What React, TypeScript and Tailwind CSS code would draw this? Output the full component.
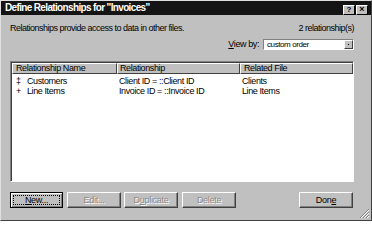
import React from "react";

const font = { fontFamily: '"Liberation Sans", Arial, sans-serif' };

function Btn({ children, disabled, focus, className = "" }: { children: React.ReactNode; disabled?: boolean; focus?: boolean; className?: string }) {
  return (
    <div className={`h-[16px] bg-[#c0c0c0] border ${focus ? "border-black shadow-[inset_1px_1px_0_#fff,inset_-1px_-1px_0_#808080]" : "border-t-white border-l-white border-r-[#404040] border-b-[#404040] shadow-[inset_-1px_-1px_0_#808080]"} flex items-center justify-center text-[9px] tracking-[-0.3px] leading-none ${disabled ? "text-[#8a8a8a] [text-shadow:1px_1px_0_#fff]" : "text-black"} ${className}`}>
      {focus ? (
        <span className="border border-dotted border-black w-[47px] h-[10px] flex items-center justify-center">{children}</span>
      ) : (
        <span>{children}</span>
      )}
    </div>
  );
}

export default function App() {
  return (
    <div className="w-[372px] h-[250px] bg-white" style={font}>
      <div className="w-[372px] h-[221px] bg-[#c0c0c0] border border-t-[#dfdfdf] border-l-[#dfdfdf] border-r-[#404040] border-b-[#404040] flex flex-col">
        <div className="h-[15px] bg-[#141414] flex items-center pl-[4px] pr-[3px]">
          <span className="text-white font-bold text-[10px] tracking-[-0.65px] leading-none">Define Relationships for "Invoices"</span>
          <div className="ml-auto flex gap-[1px] mt-[3px]">
            <div className="w-[12px] h-[10px] bg-[#c0c0c0] border border-t-white border-l-white border-r-black border-b-black flex items-center justify-center text-[8px] font-bold leading-none">?</div>
            <div className="w-[12px] h-[10px] bg-[#c0c0c0] border border-t-white border-l-white border-r-black border-b-black flex items-center justify-center text-[9px] font-bold leading-none">×</div>
          </div>
        </div>
        <div className="flex justify-between pl-[9px] pr-[17px] mt-[8px] h-[11px] text-[9px] tracking-[-0.5px] leading-[11px]">
          <span>Relationships provide access to data in other files.</span>
          <span>2 relationship(s)</span>
        </div>
        <div className="flex justify-end items-center pr-[17px] mt-[5px] h-[11px] text-[9px] tracking-[-0.4px]">
          <span className="mr-[4px]"><u>V</u>iew by:</span>
          <div className="w-[91px] h-[11px] bg-white border border-t-[#808080] border-l-[#808080] border-r-white border-b-white flex items-center">
            <span className="pl-[3px] text-[8px] leading-none">custom order</span>
            <div className="ml-auto w-[9px] h-[9px] bg-[#c0c0c0] border border-t-white border-l-white border-r-[#404040] border-b-[#404040] flex items-center justify-center">
              <div className="w-[1px] h-[1px] bg-black" />
            </div>
          </div>
        </div>
        <div className="ml-[9px] w-[344px] mt-[11px] h-[125px] bg-white border border-t-[#808080] border-l-[#808080] border-r-white border-b-white shadow-[inset_1px_1px_0_#404040] text-[9px] tracking-[-0.4px]">
          <div className="flex ml-[1px] mt-[1px] h-[11px]">
            <div className="w-[105px] bg-[#c0c0c0] border border-t-white border-l-white border-r-[#404040] border-b-[#404040] pl-[3px] leading-[9px]">Relationship Name</div>
            <div className="w-[123px] bg-[#c0c0c0] border border-t-white border-l-white border-r-[#404040] border-b-[#404040] pl-[2px] leading-[9px]">Relationship</div>
            <div className="flex-1 bg-[#c0c0c0] border border-t-white border-l-white border-r-[#404040] border-b-[#404040] pl-[3px] leading-[9px]">Related File</div>
          </div>
          <div className="flex h-[10px] mt-[2px] leading-[10px]">
            <div className="w-[106px] pl-[5px]"><span className="inline-block w-[11px]">‡</span>Customers</div>
            <div className="w-[123px] pl-[2px]">Client ID = ::Client ID</div>
            <div className="flex-1 pl-[2px]">Clients</div>
          </div>
          <div className="flex h-[10px] leading-[10px]">
            <div className="w-[106px] pl-[5px]"><span className="inline-block w-[11px] text-black">+</span>Line Items</div>
            <div className="w-[123px] pl-[2px]">Invoice ID = ::Invoice ID</div>
            <div className="flex-1 pl-[2px]">Line Items</div>
          </div>
        </div>
        <div className="flex items-center mt-[10px] pl-[9px]">
          <Btn focus className="w-[53px]"><u>N</u>ew...</Btn>
          <Btn disabled className="w-[54px] ml-[4px]">Edit...</Btn>
          <Btn disabled className="w-[54px] ml-[3px]">D<u>u</u>plicate</Btn>
          <Btn disabled className="w-[54px] ml-[4px]">Delete</Btn>
          <Btn className="w-[54px] ml-[63px]">Don<u>e</u></Btn>
        </div>
        <div className="flex justify-end pr-[1px] mt-auto mb-[1px]">
          <svg width="11" height="11" viewBox="0 0 11 11">
            <path d="M10 1L1 10M10 4L4 10M10 7L7 10" stroke="#808080" strokeWidth="1" />
            <path d="M10 2L2 10M10 5L5 10M10 8L8 10" stroke="#fff" strokeWidth="1" />
          </svg>
        </div>
      </div>
    </div>
  );
}
